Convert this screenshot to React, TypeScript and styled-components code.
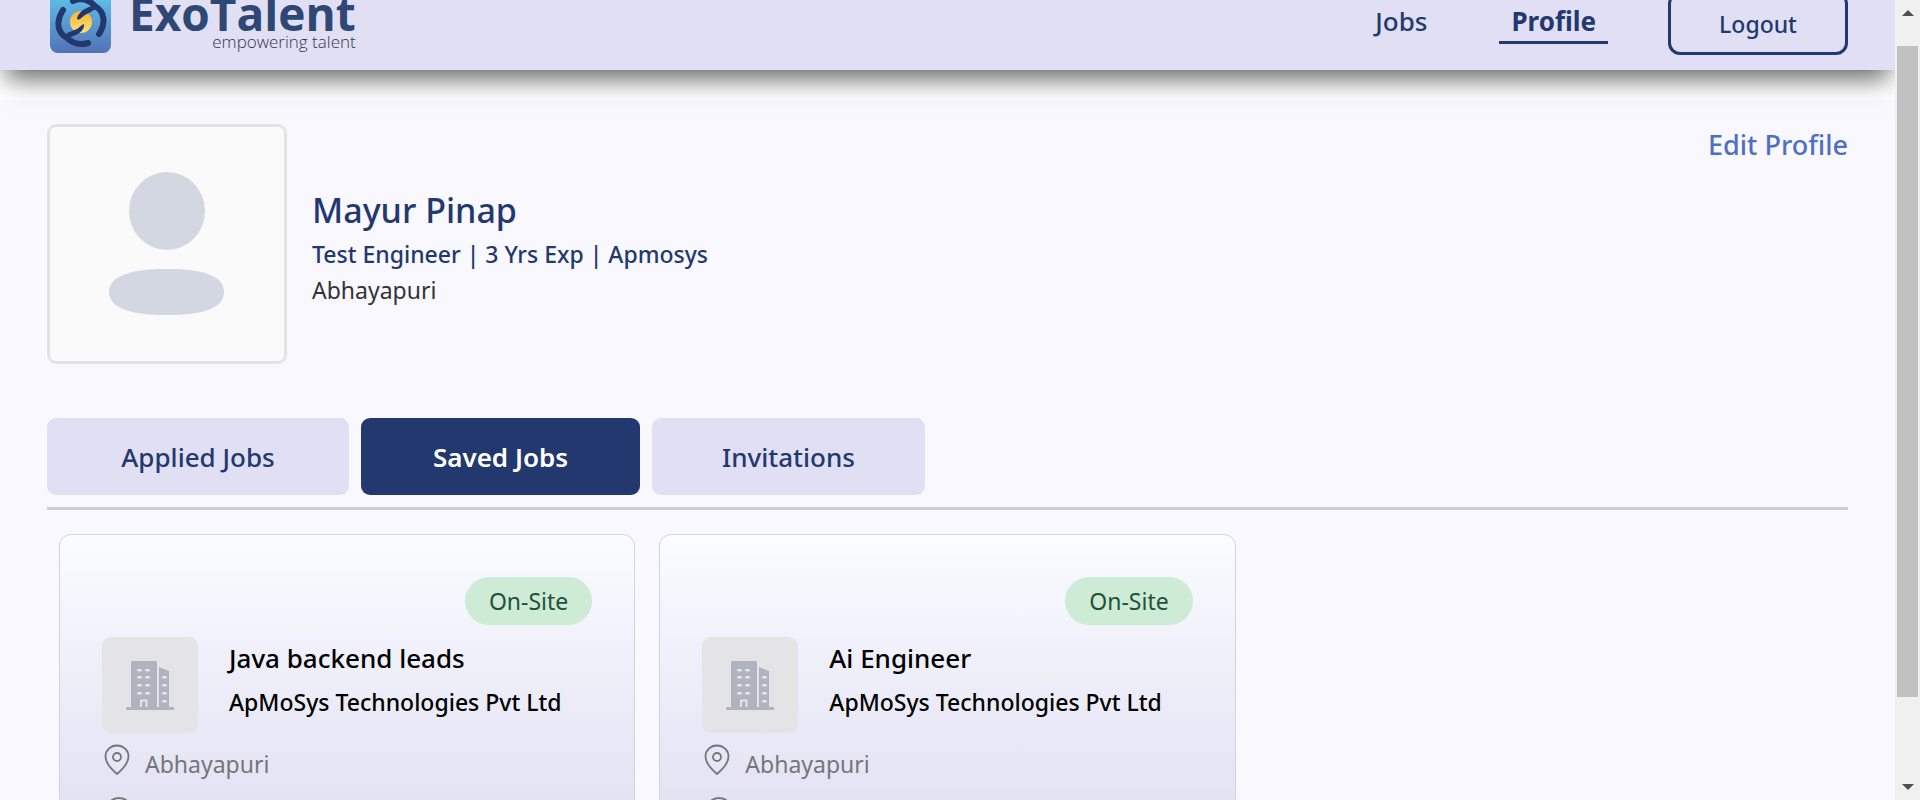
import React from "react";
import styled, { createGlobalStyle } from "styled-components";

const navy = "#22386f";
const lavender = "#e1dff3";

const GlobalStyle = createGlobalStyle`
  * { box-sizing: border-box; }
  body {
    margin: 0;
    background: #fff;
    color: #000;
    font-family: "Noto Sans", "Open Sans", sans-serif;
  }
  h1, h2, h3, p, ul { margin: 0; padding: 0; }
  button { font-family: inherit; cursor: pointer; }
`;

const Window = styled.div`
  display: flex;
  height: 100vh;
  overflow: hidden;
`;

const Page = styled.div`
  flex: 1;
  min-width: 0;
  overflow: hidden;
`;

/* The page is scrolled down a little, so the header starts above the window. */
const Header = styled.header`
  position: relative;
  z-index: 1;
  display: flex;
  align-items: flex-end;
  justify-content: space-between;
  height: 126px;
  margin-top: -56px;
  padding: 0 47px 15px;
  background: ${lavender};
  box-shadow: 0 15px 24px -6px rgba(0, 0, 0, 0.6);
`;

const Brand = styled.a`
  display: flex;
  align-items: flex-end;
  gap: 18px;
  padding: 0 0 2px 3px;
  text-decoration: none;
`;

const BrandText = styled.span`
  display: flex;
  flex-direction: column;
  align-items: flex-end;
  font-family: "Open Sans", sans-serif;
`;

const BrandName = styled.span`
  color: #2f4775;
  font-size: 46px;
  font-weight: 700;
  line-height: 36px;
`;

const Tagline = styled.span`
  color: #33364a;
  font-size: 17px;
  font-weight: 300;
  line-height: 22px;
`;

const Nav = styled.nav`
  display: flex;
  align-items: flex-end;
`;

const NavLink = styled.a<{ $active?: boolean }>`
  margin-right: 60px;
  padding: 0 12px;
  border-bottom: 3px solid ${(p) => (p.$active ? navy : "transparent")};
  margin-bottom: 11px;
  color: ${navy};
  font-size: 26px;
  font-weight: ${(p) => (p.$active ? 700 : 500)};
  line-height: 40px;
  text-decoration: none;
`;

const LogoutButton = styled.button`
  width: 180px;
  height: 63px;
  border: 3px solid ${navy};
  border-radius: 12px;
  background: transparent;
  color: ${navy};
  font-size: 23px;
  font-weight: 500;
`;

const Content = styled.main`
  margin-top: 30px;
  padding: 24px 47px 48px;
  background: #f9f8ff;
`;

const ProfileSection = styled.section`
  display: flex;
  align-items: flex-start;
  gap: 25px;
`;

const Avatar = styled.div`
  width: 240px;
  height: 240px;
  border: 3px solid #e3e3e4;
  border-radius: 9px;
  background: #fafafa;
`;

const ProfileInfo = styled.div`
  flex: 1;
  padding-top: 60px;
`;

const Name = styled.h1`
  color: ${navy};
  font-size: 34px;
  font-weight: 500;
  line-height: 52px;
`;

const Headline = styled.p`
  color: ${navy};
  font-size: 23px;
  font-weight: 500;
  line-height: 36px;
`;

const Location = styled.p`
  color: #333;
  font-size: 23px;
  line-height: 36px;
`;

const EditLink = styled.a`
  color: #4f6fc4;
  font-size: 27px;
  font-weight: 500;
  line-height: 42px;
  text-decoration: none;
`;

const Tabs = styled.div`
  display: flex;
  gap: 12px;
  margin-top: 54px;
  padding-bottom: 12px;
  border-bottom: 3px solid #cdcdd2;
`;

const Tab = styled.button<{ $width: number; $active?: boolean }>`
  width: ${(p) => p.$width}px;
  height: 77px;
  padding: 0;
  border: 0;
  border-radius: 9px;
  background: ${(p) => (p.$active ? navy : lavender)};
  color: ${(p) => (p.$active ? "#fff" : navy)};
  font-size: 26px;
  font-weight: ${(p) => (p.$active ? 600 : 500)};
`;

const CardGrid = styled.div`
  display: grid;
  grid-template-columns: repeat(3, 1fr);
  gap: 24px;
  padding: 24px 12px;
`;

const Card = styled.article`
  min-height: 400px;
  padding: 42px;
  border: 1px solid #d4d3dd;
  border-radius: 12px;
  background: linear-gradient(#fafcff 0, #f1f1fb 110px, #e3e2f3 270px, #dcdaf0 400px);
`;

const BadgeRow = styled.div`
  display: flex;
  justify-content: flex-end;
`;

const Badge = styled.span`
  padding: 0 24px;
  border-radius: 24px;
  background: #ceebd6;
  color: #1f5339;
  font-size: 23px;
  line-height: 48px;
`;

const JobSummary = styled.div`
  display: flex;
  gap: 31px;
  margin-top: 12px;
`;

const CompanyLogo = styled.div`
  display: flex;
  align-items: center;
  justify-content: center;
  flex: none;
  width: 96px;
  height: 96px;
  border-radius: 9px;
  background: #e4e4e6;
`;

const JobTitle = styled.h2`
  font-size: 26px;
  font-weight: 500;
  line-height: 42px;
`;

const Company = styled.h3`
  font-size: 23px;
  font-weight: 500;
  line-height: 46px;
`;

const FactList = styled.ul`
  margin-top: 8px;
  list-style: none;
`;

const Fact = styled.li`
  display: flex;
  align-items: flex-start;
  height: 52px;
  color: #737679;
  font-size: 23px;
  line-height: 46px;

  svg { margin: 3px 12px 0 0; }
`;

const Scrollbar = styled.div`
  display: flex;
  flex-direction: column;
  align-items: center;
  width: 25px;
  padding: 10px 2px;
  background: #f0f0f0;
`;

const Thumb = styled.div`
  width: 21px;
  height: 651px;
  margin: 30px 0 auto;
  background: #c1c1c1;
`;

const LogoMark = () => (
  <svg width="61" height="64" viewBox="0 0 61 64" aria-hidden="true">
    <defs>
      <linearGradient id="tile" x1="0" y1="0" x2="0" y2="1">
        <stop offset="0" stopColor="#62c8f0" />
        <stop offset="1" stopColor="#5272b6" />
      </linearGradient>
      <linearGradient id="sun" x1="0" y1="0" x2="0" y2="1">
        <stop offset="0" stopColor="#fbb52c" />
        <stop offset="1" stopColor="#fde07c" />
      </linearGradient>
    </defs>
    <rect width="61" height="64" rx="8" fill="url(#tile)" />
    <circle cx="31" cy="33" r="11" fill="url(#sun)" />
    <g fill="none" stroke="#22386f" strokeWidth="6" strokeLinecap="round" strokeLinejoin="round">
      <path d="M13 21C5 34 8 44 17 49C23 55 31 56 38 54" />
      <path d="M49 45C56 34 55 23 45 17C38 10 30 9 23 12" />
    </g>
    <path d="M47 16C38 17 29 22 27 29Q27 32 30 30L35 26L46 20Z" fill="#22386f" />
    <path d="M15 49C24 48 33 44 34 37Q35 34 32 36L27 40L17 44Z" fill="#22386f" />
  </svg>
);

const PersonPicture = () => (
  <svg width="234" height="234" viewBox="0 0 234 234" role="img" aria-label="Profile picture">
    <g fill="#d3d7e2">
      <ellipse cx="117" cy="84" rx="38" ry="39" />
      <path d="M59 165C59 150 78 142 117 142S174 150 174 165S156 188 117 188S59 180 59 165Z" />
    </g>
  </svg>
);

const BuildingIcon = () => (
  <svg width="48" height="49" viewBox="0 0 48 49" aria-hidden="true">
    <g fill="#b0b3bf">
      <rect x="5" y="0" width="26" height="47" rx="1" />
      <path d="M33 6L43 10V47H33Z" />
      <rect x="0" y="46" width="48" height="3" rx="1" />
    </g>
    <g fill="#e4e4e6">
      {[8, 15, 23, 31].map((y) => (
        <React.Fragment key={y}>
          <rect x="11" y={y} width="5" height="2.5" rx="1" />
          <rect x="19" y={y} width="5" height="2.5" rx="1" />
        </React.Fragment>
      ))}
      {[15, 23, 31, 39].map((y) => (
        <rect key={y} x="36" y={y} width="5" height="2.5" rx="1" />
      ))}
    </g>
    <path d="M15 46V39.500H20.500V46" fill="none" stroke="#e4e4e6" strokeWidth="2" />
  </svg>
);

const PinIcon = () => (
  <svg width="31" height="32" viewBox="0 0 31 32" fill="none" stroke="#737679" strokeWidth="1.800" aria-hidden="true">
    <path d="M15 30C8.500 24.500 3.500 18.500 3.500 12.500A11.500 11 0 0 1 26.500 12.500C26.500 18.500 21.500 24.500 15 30Z" strokeLinejoin="round" />
    <circle cx="15" cy="13" r="4" />
  </svg>
);

const ClockIcon = () => (
  <svg width="31" height="32" viewBox="0 0 31 32" fill="none" stroke="#737679" strokeWidth="2" aria-hidden="true">
    <circle cx="17" cy="15" r="13" />
    <path d="M17 7V15L22 18" />
  </svg>
);

const jobs = [
  { title: "Java backend leads", company: "ApMoSys Technologies Pvt Ltd", place: "Abhayapuri", mode: "On-Site" },
  { title: "Ai Engineer", company: "ApMoSys Technologies Pvt Ltd", place: "Abhayapuri", mode: "On-Site" },
];

export default function App() {
  return (
    <Window>
      <GlobalStyle />
      <Page>
        <Header>
          <Brand href="#home">
            <LogoMark />
            <BrandText>
              <BrandName>ExoTalent</BrandName>
              <Tagline>empowering talent</Tagline>
            </BrandText>
          </Brand>
          <Nav>
            <NavLink href="#jobs">Jobs</NavLink>
            <NavLink href="#profile" $active>Profile</NavLink>
            <LogoutButton type="button">Logout</LogoutButton>
          </Nav>
        </Header>
        <Content>
          <ProfileSection>
            <Avatar><PersonPicture /></Avatar>
            <ProfileInfo>
              <Name>Mayur Pinap</Name>
              <Headline>Test Engineer | 3 Yrs Exp | Apmosys</Headline>
              <Location>Abhayapuri</Location>
            </ProfileInfo>
            <EditLink href="#edit">Edit Profile</EditLink>
          </ProfileSection>
          <Tabs role="tablist">
            <Tab type="button" role="tab" $width={302}>Applied Jobs</Tab>
            <Tab type="button" role="tab" aria-selected $width={279} $active>Saved Jobs</Tab>
            <Tab type="button" role="tab" $width={273}>Invitations</Tab>
          </Tabs>
          <CardGrid>
            {jobs.map((job) => (
              <Card key={job.title}>
                <BadgeRow><Badge>{job.mode}</Badge></BadgeRow>
                <JobSummary>
                  <CompanyLogo><BuildingIcon /></CompanyLogo>
                  <div>
                    <JobTitle>{job.title}</JobTitle>
                    <Company>{job.company}</Company>
                  </div>
                </JobSummary>
                <FactList>
                  <Fact><PinIcon />{job.place}</Fact>
                  <Fact><ClockIcon /></Fact>
                </FactList>
              </Card>
            ))}
          </CardGrid>
        </Content>
      </Page>
      <Scrollbar aria-hidden="true">
        <svg width="12" height="6" viewBox="0 0 12 6"><path d="M0 6L6 0L12 6Z" fill="#505050" /></svg>
        <Thumb />
        <svg width="12" height="6" viewBox="0 0 12 6"><path d="M0 0L6 6L12 0Z" fill="#505050" /></svg>
      </Scrollbar>
    </Window>
  );
}
